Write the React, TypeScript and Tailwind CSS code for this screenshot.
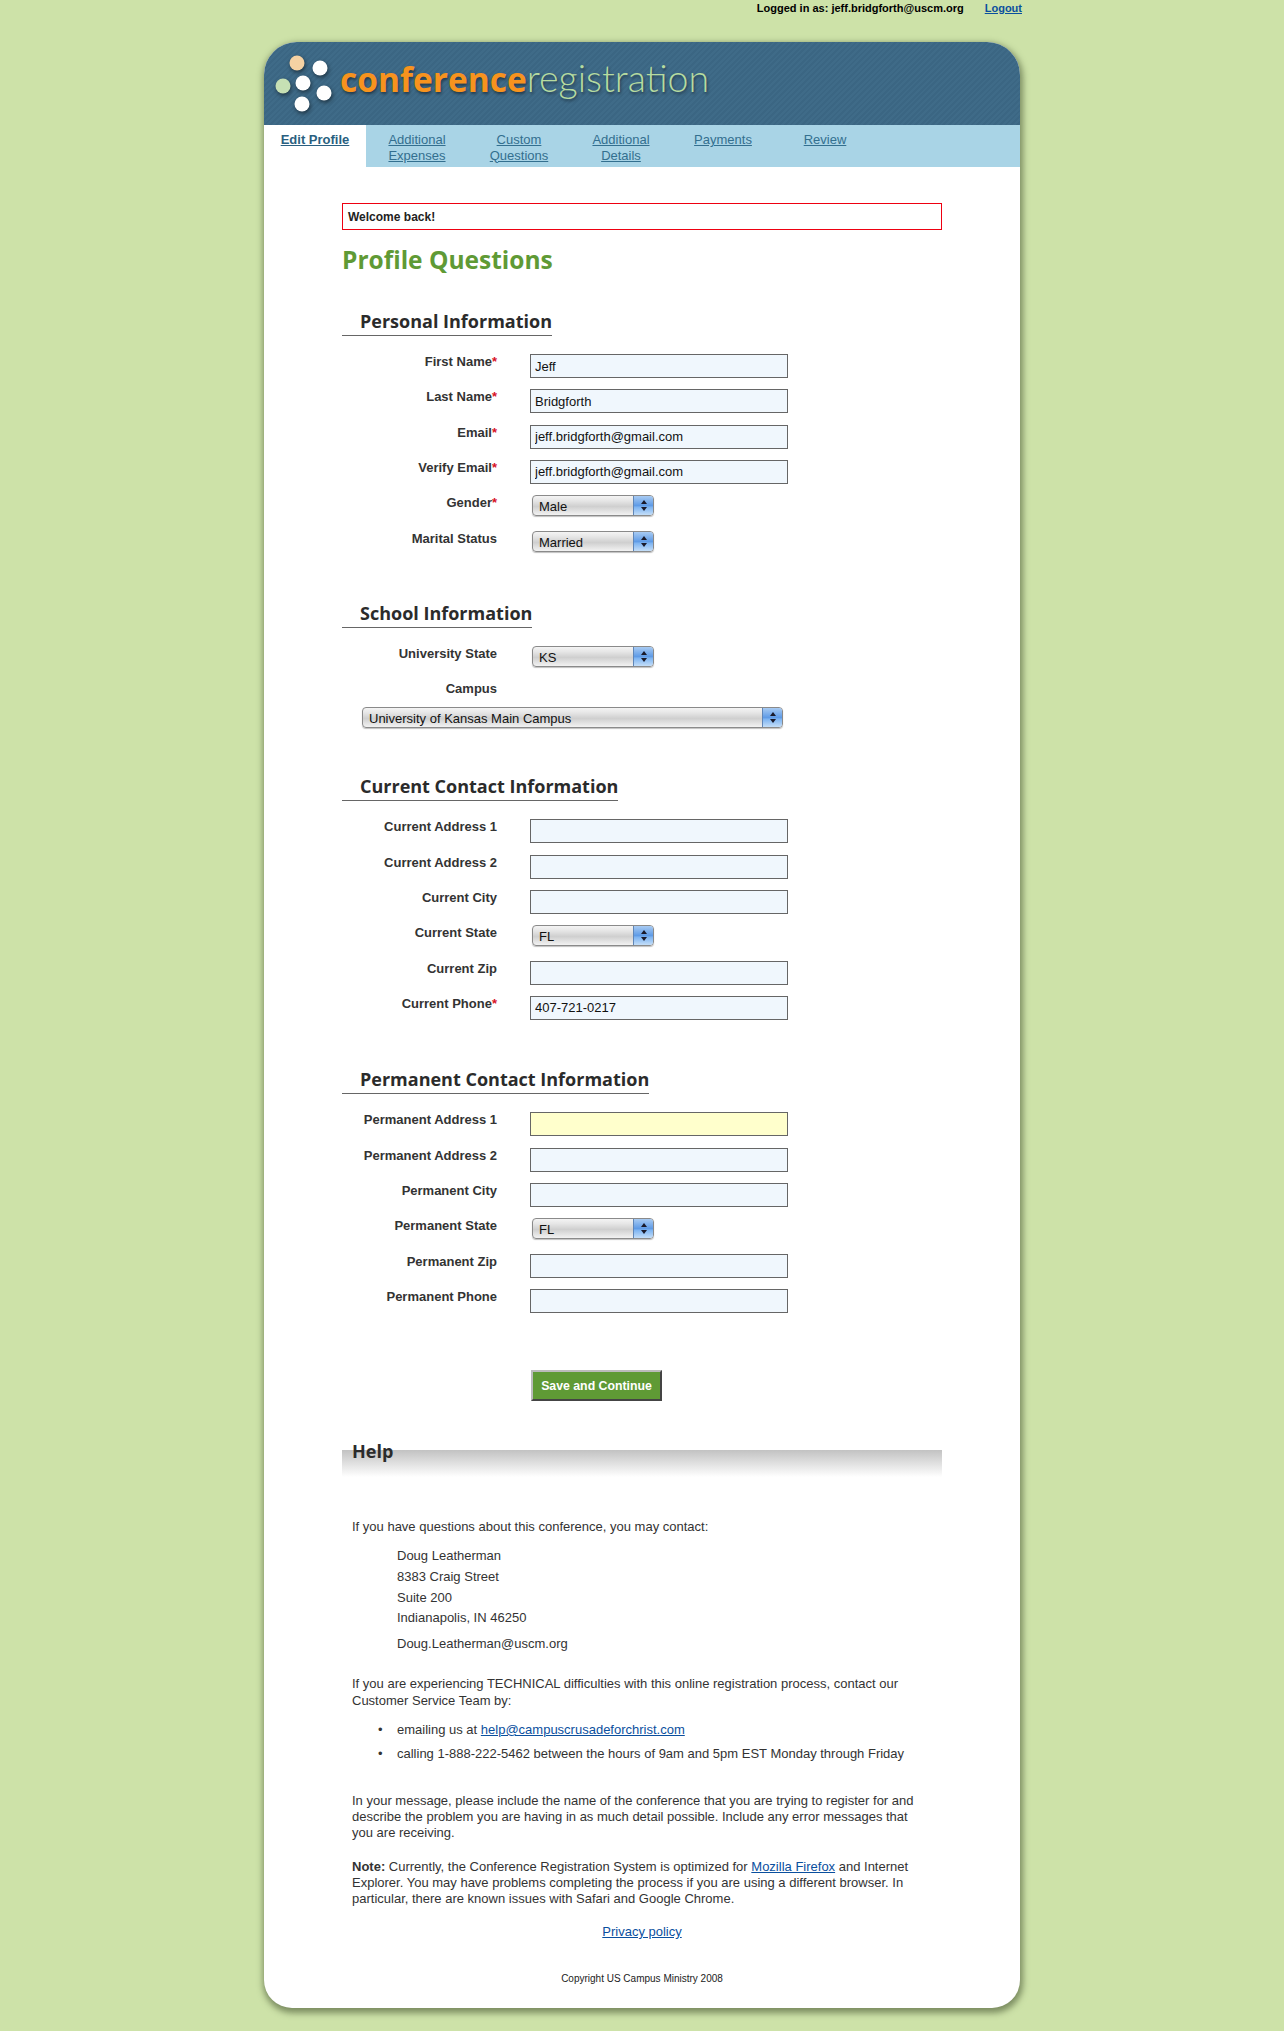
const navTabs = [
  ['Edit Profile'],
  ['Additional', 'Expenses'],
  ['Custom', 'Questions'],
  ['Additional', 'Details'],
  ['Payments'],
  ['Review'],
];

type Field = {
  label: string;
  required?: boolean;
  value?: string;
  select?: boolean;
  highlight?: boolean;
};

const personalFields: Field[] = [
  { label: 'First Name', required: true, value: 'Jeff' },
  { label: 'Last Name', required: true, value: 'Bridgforth' },
  { label: 'Email', required: true, value: 'jeff.bridgforth@gmail.com' },
  { label: 'Verify Email', required: true, value: 'jeff.bridgforth@gmail.com' },
  { label: 'Gender', required: true, value: 'Male', select: true },
  { label: 'Marital Status', value: 'Married', select: true },
];

const currentFields: Field[] = [
  { label: 'Current Address 1' },
  { label: 'Current Address 2' },
  { label: 'Current City' },
  { label: 'Current State', value: 'FL', select: true },
  { label: 'Current Zip' },
  { label: 'Current Phone', required: true, value: '407-721-0217' },
];

const permanentFields: Field[] = [
  { label: 'Permanent Address 1', highlight: true },
  { label: 'Permanent Address 2' },
  { label: 'Permanent City' },
  { label: 'Permanent State', value: 'FL', select: true },
  { label: 'Permanent Zip' },
  { label: 'Permanent Phone' },
];

function FakeSelect({ value, wide }: { value: string; wide?: boolean }) {
  return (
    <div
      className={`flex h-[21px] overflow-hidden rounded-[4px] border border-[#8a8a8a] bg-[linear-gradient(#f4f4f4,#e6e6e6_25%,#cfcfcf_55%,#f2f2f2)] shadow-[0_1px_1px_rgba(0,0,0,0.25)] ${
        wide ? 'w-[421px]' : 'ml-[2px] w-[122px]'
      }`}
    >
      <span className="flex-1 pl-[6px] text-[13px] leading-[21px] text-[#111]">{value}</span>
      <span className="flex w-[20px] items-center justify-center border-l border-[#5f86b8] bg-[linear-gradient(#a8cbf3,#5f9be6_50%,#7fb5f2_60%,#c4def8)]">
        <svg width="8" height="13" viewBox="0 0 8 13">
          <path d="M4 1L7 5H1z" fill="#1a1a2a" />
          <path d="M4 12L1 8H7z" fill="#1a1a2a" />
        </svg>
      </span>
    </div>
  );
}

function FormRow({ field }: { field: Field }) {
  return (
    <div className="flex h-[35.33px] items-start">
      <label className="mr-[33px] w-[155px] text-right text-[13px] font-bold leading-[15px] text-[#333]">
        {field.label}
        {field.required && <span className="text-[#d8121f]">*</span>}
      </label>
      {field.select ? (
        <FakeSelect value={field.value ?? ''} />
      ) : (
        <input
          readOnly
          value={field.value ?? ''}
          className={`h-[24px] w-[258px] border border-[#666] px-[4px] text-[13px] text-[#111] ${
            field.highlight ? 'bg-[#ffffcc]' : 'bg-[#f0f7fd]'
          }`}
        />
      )}
    </div>
  );
}

function SectionHeading({ title }: { title: string }) {
  return (
    <h2 className="h-[29px] w-fit border-b border-[#666] pl-[18px] font-['Open_Sans',sans-serif] text-[18px] font-bold leading-[29px] text-[#2b2b2b]">
      {title}
    </h2>
  );
}

function Logo() {
  return (
    <div className="flex h-[83px] items-start">
      <svg
        width="62"
        height="70"
        viewBox="0 0 62 70"
        className="ml-[10px] mt-[12px] drop-shadow-[1px_2px_2px_rgba(0,0,0,0.5)]"
      >
        <circle cx="23" cy="9" r="7.5" fill="#f5d2a3" />
        <circle cx="46" cy="14" r="7.5" fill="#ffffff" />
        <circle cx="29" cy="29" r="7.5" fill="#ffffff" />
        <circle cx="9" cy="32" r="7.5" fill="#c6e0b4" />
        <circle cx="50" cy="39" r="7.5" fill="#ffffff" />
        <circle cx="28" cy="50" r="7.5" fill="#ffffff" />
      </svg>
      <div className="ml-[4px] mt-[11px] font-['Open_Sans',sans-serif] leading-[50px] [text-shadow:1px_2px_3px_rgba(0,0,0,0.45)]">
        <span className="text-[33.5px] font-bold text-[#f7931e]">conference</span>
        <span className="font-['Lato',sans-serif] text-[37.5px] font-light text-[#b6dba0]">registration</span>
      </div>
    </div>
  );
}

export default function App() {
  return (
    <div className="min-h-[2031px] bg-[#cde2a8] pb-[23px] font-['Liberation_Sans',Arial,sans-serif] text-[13px] text-[#333]">
      <div className="flex h-[42px] justify-end pr-[262px] pt-px text-[11px] font-bold leading-[15px] text-black">
        <span>Logged in as: jeff.bridgforth@uscm.org</span>
        <a href="#" className="ml-[21px] text-[#0a4f9e] underline">Logout</a>
      </div>

      <div className="mx-auto w-[756px] overflow-hidden rounded-t-[33px] rounded-b-[28px] bg-white shadow-[1px_3px_6px_2px_rgba(70,85,50,0.6)]">
        <div className="bg-[repeating-linear-gradient(135deg,#3f6b88_0px,#3f6b88_2px,#3b6683_2px,#3b6683_4px)]">
          <Logo />
        </div>

        <nav className="flex h-[42px] bg-[#a9d4e6]">
          {navTabs.map((lines, i) => (
            <a
              key={lines.join(' ')}
              href="#"
              className={`w-[102px] pt-[7px] text-center text-[13px] leading-[15.5px] underline ${
                i === 0 ? 'bg-white font-bold text-[#2a5f80]' : 'text-[#336f8f]'
              }`}
            >
              {lines.map((line) => (
                <div key={line}>{line}</div>
              ))}
            </a>
          ))}
        </nav>

        <div className="px-[78px] pb-[22px] pt-[36px]">
          <div className="flex h-[27px] items-center border border-[#ee0011] pl-[5px] text-[12px] font-bold text-[#222]">
            Welcome back!
          </div>
          <h1 className="mt-[13px] font-['Open_Sans',sans-serif] text-[24.5px] font-bold leading-[33px] text-[#5f9a35]">
            Profile Questions
          </h1>

          <div className="mt-[31px]">
            <SectionHeading title="Personal Information" />
            <div className="mt-[18px]">
              {personalFields.map((f) => (
                <FormRow key={f.label} field={f} />
              ))}
            </div>
          </div>

          <div className="mt-[33px]">
            <SectionHeading title="School Information" />
            <div className="mt-[18px]">
              <FormRow field={{ label: 'University State', value: 'KS', select: true }} />
              <div className="flex h-[26px] items-start">
                <label className="w-[155px] text-right text-[13px] font-bold leading-[15px] text-[#333]">Campus</label>
              </div>
              <div className="pl-[20px]">
                <FakeSelect value="University of Kansas Main Campus" wide />
              </div>
            </div>
          </div>

          <div className="mt-[44px]">
            <SectionHeading title="Current Contact Information" />
            <div className="mt-[18px]">
              {currentFields.map((f) => (
                <FormRow key={f.label} field={f} />
              ))}
            </div>
          </div>

          <div className="mt-[34px]">
            <SectionHeading title="Permanent Contact Information" />
            <div className="mt-[18px]">
              {permanentFields.map((f) => (
                <FormRow key={f.label} field={f} />
              ))}
            </div>
          </div>

          <button className="ml-[189px] mt-[46px] block h-[31px] w-[131px] border-[2px] border-b-[#444] border-l-[#bbb] border-r-[#444] border-t-[#bbb] bg-[#5f9a35] text-[12.3px] font-bold text-white">
            Save and Continue
          </button>

          {/* Help */}
          <div className="mt-[49px] h-[27px] bg-[linear-gradient(#c2c2c2,#ffffff)]">
            <h2 className="ml-[10px] -translate-y-[11px] font-['Open_Sans',sans-serif] text-[18px] font-bold leading-[24px] text-[#2b2b2b]">
              Help
            </h2>
          </div>

          <div className="px-[10px]">
            <p className="mt-[42px] leading-[16px]">If you have questions about this conference, you may contact:</p>
            <div className="ml-[45px] mt-[11px] leading-[20.7px]">
              <div>Doug Leatherman</div>
              <div>8383 Craig Street</div>
              <div>Suite 200</div>
              <div>Indianapolis, IN 46250</div>
            </div>
            <p className="ml-[45px] mt-[7px] leading-[16px]">Doug.Leatherman@uscm.org</p>
            <p className="mt-[24px] leading-[16.5px]">
              If you are experiencing TECHNICAL difficulties with this online registration process, contact our Customer Service Team by:
            </p>
            <ul className="ml-[26px] mt-[13px] leading-[16px]">
              <li className="mb-[8px] flex">
                <span className="w-[19px]">•</span>
                <span>
                  emailing us at <a href="#" className="text-[#0a4f9e] underline">help@campuscrusadeforchrist.com</a>
                </span>
              </li>
              <li className="flex">
                <span className="w-[19px]">•</span>
                <span>calling 1-888-222-5462 between the hours of 9am and 5pm EST Monday through Friday</span>
              </li>
            </ul>
            <p className="mt-[31px] leading-[16px]">
              In your message, please include the name of the conference that you are trying to register for and describe the problem you are having in as much detail possible. Include any error messages that you are receiving.
            </p>
            <p className="mt-[18px] leading-[16px]">
              <b>Note:</b> Currently, the Conference Registration System is optimized for{' '}
              <a href="#" className="text-[#0a4f9e] underline">Mozilla Firefox</a> and Internet Explorer. You may have problems completing the process if you are using a different browser. In particular, there are known issues with Safari and Google Chrome.
            </p>
            <p className="mt-[17px] text-center leading-[16px]">
              <a href="#" className="text-[#0a4f9e] underline">Privacy policy</a>
            </p>
            <p className="mt-[32px] text-center text-[10px] leading-[14px] text-[#222]">Copyright US Campus Ministry 2008</p>
          </div>
        </div>
      </div>
    </div>
  );
}
